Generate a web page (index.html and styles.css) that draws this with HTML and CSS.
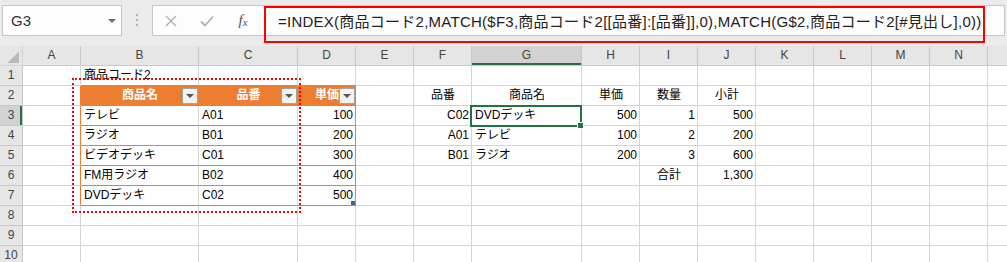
FILE: index.html
```html
<!DOCTYPE html>
<html lang="ja">
<head>
  <meta charset="UTF-8">
  <title>商品コード2 - INDEX/MATCH</title>
  <link rel="stylesheet" href="styles.css">
</head>
<body>

  <div class="topbar">
    <div class="namebox">
      <span class="ref">G3</span>
      <span class="caret"></span>
    </div>
    <div class="grip"><i></i><i></i><i></i></div>
    <div class="fbar">
      <span class="fbtn">
        <svg width="12" height="12" viewBox="0 0 12 12"><path d="M1 1 L11 11 M11 1 L1 11" stroke="#b0b0b0" stroke-width="1.4" fill="none"/></svg>
      </span>
      <span class="fbtn">
        <svg width="14" height="12" viewBox="0 0 14 12"><path d="M1 6.5 L5 10.5 L13 1.5" stroke="#b0b0b0" stroke-width="1.8" fill="none"/></svg>
      </span>
      <span class="fbtn fx">f<small>x</small></span>
      <div class="formula">=INDEX(商品コード2,MATCH($F3,商品コード2[[品番]:[品番]],0),MATCH(G$2,商品コード2[#見出し],0))</div>
    </div>
    <div class="mark-formula"></div>
  </div>

  <div class="sheet">
    <div class="grid" id="grid"></div>
    <div class="mark-range"></div>
    <div class="cursor"><span class="handle"></span></div>
  </div>

  <script>
    const data = {
      B1: "商品コード2",
      B2: "商品名", C2: "品番", D2: "単価",
      B3: "テレビ", C3: "A01", D3: 100,
      B4: "ラジオ", C4: "B01", D4: 200,
      B5: "ビデオデッキ", C5: "C01", D5: 300,
      B6: "FM用ラジオ", C6: "B02", D6: 400,
      B7: "DVDデッキ", C7: "C02", D7: 500,
      F2: "品番", G2: "商品名", H2: "単価", I2: "数量", J2: "小計",
      F3: "C02", G3: "DVDデッキ", H3: 500, I3: 1, J3: 500,
      F4: "A01", G4: "テレビ", H4: 100, I4: 2, J4: 200,
      F5: "B01", G5: "ラジオ", H5: 200, I5: 3, J5: 600,
      I6: "合計", J6: "1,300"
    };
    const rightCells = ["F3", "F4", "F5", "J6"];
    const centerCells = ["F2", "G2", "H2", "I2", "J2", "I6"];
    const cols = "ABCDEFGHIJKLMNO".split("");
    const grid = document.getElementById("grid");

    function addCell(classes, text) {
      const div = document.createElement("div");
      div.className = classes.join(" ");
      if (text !== undefined) div.textContent = text;
      grid.appendChild(div);
      return div;
    }

    // fila de encabezados (la columna O queda cortada, sin letra visible)
    addCell(["corner"]);
    for (let c of cols) {
      const label = c === "O" ? "" : c;
      addCell(c === "G" ? ["colhead", "active"] : ["colhead"], label);
    }

    for (let r = 1; r <= 10; r++) {
      addCell(r === 3 ? ["rowhead", "active"] : ["rowhead"], r);

      for (let c of cols) {
        const ref = c + r;
        const value = data[ref];
        const classes = ["cell"];
        const inTable = c === "B" || c === "C" || c === "D";

        if (inTable && r === 1) classes.push("tt");
        if (inTable && r === 2) classes.push("th");
        if (inTable && r >= 3 && r <= 7) classes.push("tb");
        if (c === "D" && r >= 3 && r <= 7) classes.push("tb-r");
        if (c === "A" && r >= 2 && r <= 7) classes.push("tl");

        if (typeof value === "number" || rightCells.includes(ref)) classes.push("right");
        if (centerCells.includes(ref)) classes.push("center");

        const div = addCell(classes, value);

        if (inTable && r === 2) {
          const btn = document.createElement("span");
          btn.className = "filter";
          div.appendChild(btn);
        }
        if (ref === "D7") {
          const grip = document.createElement("span");
          grip.className = "resize";
          div.appendChild(grip);
        }
      }
    }
  </script>
</body>
</html>
```

FILE: styles.css
```css
body {
  margin: 0;
  width: 1007px;
  height: 262px;
  overflow: hidden;
  background: #fff;
  font-family: "Liberation Sans", "Noto Sans CJK JP", sans-serif;
  color: #000;
}

/* barra de fórmulas */
.topbar {
  position: relative;
  display: flex;
  align-items: flex-start;
  height: 46px;
  padding-top: 5px;
  box-sizing: border-box;
  background: #ebebeb;
}
.namebox {
  display: flex;
  align-items: center;
  justify-content: space-between;
  box-sizing: border-box;
  width: 120px;
  height: 31px;
  margin-left: 2px;
  padding: 0 5px 0 8px;
  background: #fdfdfd;
  border: 1px solid #c6c6c6;
}
.ref {
  font-size: 15px;
  color: #333;
}
.caret {
  width: 0;
  height: 0;
  border-left: 4px solid transparent;
  border-right: 4px solid transparent;
  border-top: 4px solid #6a6a6a;
}
.grip {
  display: flex;
  flex-direction: column;
  align-items: center;
  gap: 3px;
  width: 30px;
  padding-top: 9px;
}
.grip i {
  display: block;
  width: 2px;
  height: 2px;
  background: #b4b4b4;
}
.fbar {
  flex: 1;
  display: flex;
  align-items: center;
  box-sizing: border-box;
  height: 31px;
  margin-right: 2px;
  background: #fdfdfd;
  border: 1px solid #c6c6c6;
}
.fbtn {
  display: flex;
  align-items: center;
  justify-content: center;
  width: 36px;
  height: 100%;
}
.fx {
  font-family: "Liberation Serif", serif;
  font-style: italic;
  font-size: 15px;
  color: #555;
}
.fx small {
  font-size: 11px;
  margin-top: 3px;
}
.formula {
  padding-left: 17px;
  font-size: 15px;
  letter-spacing: 0.25px;
  color: #222;
  white-space: nowrap;
}
.mark-formula {
  position: absolute;
  left: 264px;
  top: 6px;
  width: 721px;
  height: 37px;
  box-sizing: border-box;
  border: 2px solid #ff0000;
}

/* hoja */
.sheet {
  position: relative;
}
.grid {
  display: grid;
  grid-template-columns: 23px 58px 118px 99px 58px 58px 58px 110px 58px 58px 58px 58px 58px 58px 58px 58px;
  grid-auto-rows: 20px;
  font-size: 12px;
}
.grid > div {
  box-sizing: border-box;
  border-right: 1px solid #d4d4d4;
  border-bottom: 1px solid #d4d4d4;
  line-height: 19px;
  white-space: nowrap;
}
.corner {
  display: flex;
  align-items: flex-end;
  justify-content: flex-end;
  padding: 0 3px 2px 0;
  background: #e6e6e6;
}
.corner::after {
  content: "";
  width: 11px;
  height: 11px;
  background: linear-gradient(135deg, transparent 50%, #b9b9b9 50%);
}
.grid > .colhead,
.grid > .rowhead {
  background: #e6e6e6;
  border-color: #c8c8c8;
  color: #444;
  text-align: center;
}
.colhead.active {
  background: #d2d2d2;
  box-shadow: inset 0 -2px #217346;
}
.rowhead.active {
  background: #d2d2d2;
  box-shadow: inset -2px 0 #217346;
}
.cell {
  padding: 0 2px 0 3px;
}
.right {
  text-align: right;
}
.center {
  text-align: center;
}

/* tabla 商品コード2 */
.grid > .tt,
.grid > .tb {
  border-bottom-color: #ed7d31;
}
.grid > .tl,
.grid > .tb-r {
  border-right-color: #ed7d31;
}
.grid > .th {
  position: relative;
  background: #ed7d31;
  border-color: #ed7d31;
  color: #fff;
  font-weight: bold;
  text-align: center;
}
.filter {
  position: absolute;
  right: 0;
  top: 2px;
  width: 16px;
  height: 16px;
  box-sizing: border-box;
  display: flex;
  align-items: center;
  justify-content: center;
  background: #f3f3f3;
  border: 1px solid #a3a3a3;
}
.filter::after {
  content: "";
  border-left: 4px solid transparent;
  border-right: 4px solid transparent;
  border-top: 4px solid #555;
}
.tb-r {
  position: relative;
}
.resize {
  position: absolute;
  right: 0;
  bottom: 0;
  width: 4px;
  height: 4px;
  background: #3d5ca8;
}

/* marcas encima de la hoja */
.mark-range {
  position: absolute;
  left: 72px;
  top: 32px;
  width: 229px;
  height: 135px;
  box-sizing: border-box;
  border: 2px dotted #ff0000;
}
.cursor {
  position: absolute;
  left: 470px;
  top: 59px;
  width: 112px;
  height: 22px;
  box-sizing: border-box;
  border: 2px solid #217346;
}
.handle {
  position: absolute;
  right: -4px;
  bottom: -4px;
  width: 5px;
  height: 5px;
  background: #217346;
  border: 1px solid #fff;
}
```
